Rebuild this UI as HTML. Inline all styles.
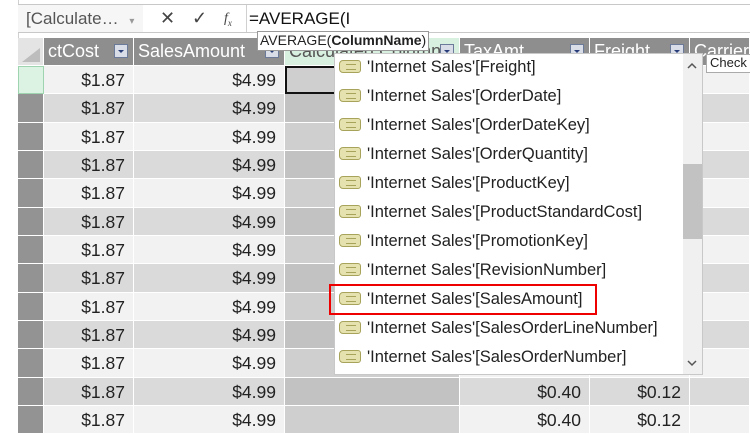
<!DOCTYPE html>
<html><head><style>
body{margin:0;width:750px;height:432px;overflow:hidden;background:#fff;font-family:"Liberation Sans",sans-serif;position:relative}
.abs{position:absolute}
.grid{position:absolute;left:18px;top:38px;display:grid;grid-template-columns:26px 90px 151px 175px 130px 100px 60px;grid-template-rows:28px repeat(13,28.33px)}
.grid div{box-sizing:border-box;border-right:1px solid #fff;border-bottom:1px solid #fff;font-size:17.5px;color:#222;text-align:right;padding-right:8px;line-height:28px;white-space:nowrap;overflow:hidden}
.h{background:#8e8e8e;color:#fff!important;text-align:left!important;padding-left:4px;line-height:27px!important;position:relative;font-size:18px!important}
.h i{position:absolute;right:5px;top:6px;width:14px;height:14px;background:#d8dde8;border:1px solid #6b7a99;box-sizing:border-box}
.h i:after{content:"";position:absolute;left:3px;top:5px;border-left:3px solid transparent;border-right:3px solid transparent;border-top:3px solid #2a3f7a}
.o{background:#f2f2f2}.e{background:#dadada}
.s{background:#939393}.c{background:#cfcfcf}.ce{background:#c2c2c2}
.dd{left:334px;top:53px;width:369px;height:322px;background:#fff;border:1px solid #c8c8c8;box-sizing:border-box}
.it{position:absolute;left:4px;height:29px;font-size:16.5px;color:#222;line-height:29px;white-space:nowrap}
.tag{display:inline-block;width:22px;height:13px;background:#e6e2b0;border:1px solid #a8a35a;border-radius:4px 3px 3px 4px;vertical-align:middle;margin-right:6px;box-sizing:border-box;position:relative;top:-1px}
.tag:after{content:"";position:absolute;left:6px;top:3px;width:10px;height:4px;border-top:1px solid #a8a35a;border-bottom:1px solid #a8a35a}
</style></head><body>
<div class="abs" style="left:0;top:0;width:18px;height:432px;background:#fff;border-right:1px solid #d0d0d0"></div>
<div class="abs" style="left:18px;top:4px;width:732px;height:1px;background:#c8c8c8"></div>
<div class="abs" style="left:18px;top:32px;width:732px;height:1px;background:#c8c8c8"></div>
<div class="abs" style="left:18px;top:5px;width:125px;height:27px;background:#f6f6f6;font-size:17px;color:#555;line-height:27px;padding-left:8px;box-sizing:border-box">[Calculate… <span style="font-size:10px;color:#999;margin-left:6px">▾</span></div>
<div class="abs" style="left:160px;top:5px;font-size:18px;color:#444;line-height:27px">✕</div>
<div class="abs" style="left:192px;top:5px;font-size:18px;color:#444;line-height:27px">✓</div>
<div class="abs" style="left:224px;top:5px;font-size:14px;color:#444;line-height:27px;font-family:'Liberation Serif',serif;font-style:italic">f<sub style="font-size:9px">x</sub></div>
<div class="abs" style="left:246px;top:5px;width:1px;height:27px;background:#d0d0d0"></div>
<div class="abs" style="left:249px;top:5px;font-size:17px;color:#111;line-height:27px">=AVERAGE(I</div>
<div class="grid">
<div class="h" style="background:#e4e4e4"><span style="position:absolute;left:4px;bottom:3px;border-left:18px solid transparent;border-bottom:14px solid #bdbdbd"></span></div><div class="h">ctCost<i></i></div><div class="h">SalesAmount<i></i></div><div class="h" style="background:#d8f0df;color:#555!important">Calculated Column 1<i></i></div><div class="h">TaxAmt<i></i></div><div class="h">Freight<i></i></div><div class="h">Carrier</div>
<div style="background:#dcf2e3;border:1px solid #9ed4b0"></div><div class="o">$1.87</div><div class="o">$4.99</div><div class="c" style="border:2px solid #111"></div><div class="o"></div><div class="o"></div><div class="o"></div>
<div class="s"></div><div class="e">$1.87</div><div class="e">$4.99</div><div class="ce"></div><div class="e"></div><div class="e"></div><div class="e"></div>
<div class="s"></div><div class="o">$1.87</div><div class="o">$4.99</div><div class="c"></div><div class="o"></div><div class="o"></div><div class="o"></div>
<div class="s"></div><div class="e">$1.87</div><div class="e">$4.99</div><div class="ce"></div><div class="e"></div><div class="e"></div><div class="e"></div>
<div class="s"></div><div class="o">$1.87</div><div class="o">$4.99</div><div class="c"></div><div class="o"></div><div class="o"></div><div class="o"></div>
<div class="s"></div><div class="e">$1.87</div><div class="e">$4.99</div><div class="ce"></div><div class="e"></div><div class="e"></div><div class="e"></div>
<div class="s"></div><div class="o">$1.87</div><div class="o">$4.99</div><div class="c"></div><div class="o"></div><div class="o"></div><div class="o"></div>
<div class="s"></div><div class="e">$1.87</div><div class="e">$4.99</div><div class="ce"></div><div class="e"></div><div class="e"></div><div class="e"></div>
<div class="s"></div><div class="o">$1.87</div><div class="o">$4.99</div><div class="c"></div><div class="o"></div><div class="o"></div><div class="o"></div>
<div class="s"></div><div class="e">$1.87</div><div class="e">$4.99</div><div class="ce"></div><div class="e"></div><div class="e"></div><div class="e"></div>
<div class="s"></div><div class="o">$1.87</div><div class="o">$4.99</div><div class="c"></div><div class="o"></div><div class="o"></div><div class="o"></div>
<div class="s"></div><div class="e">$1.87</div><div class="e">$4.99</div><div class="ce"></div><div class="e">$0.40</div><div class="e">$0.12</div><div class="e"></div>
<div class="s"></div><div class="o">$1.87</div><div class="o">$4.99</div><div class="c"></div><div class="o">$0.40</div><div class="o">$0.12</div><div class="o"></div>
</div>
<div class="abs" style="left:257px;top:31px;height:18px;background:#fff;border:1px solid #999;font-size:14px;line-height:17px;padding:0 2px;color:#222">AVERAGE(<b>ColumnName</b>)</div>
<div class="abs" style="left:706px;top:54px;height:17px;background:#fff;border:1px solid #aaa;font-size:13px;line-height:16px;padding:0 3px;color:#222;width:60px">Check</div>
<div class="abs dd">
<div class="it" style="top:-1px"><span class="tag"></span>'Internet Sales'[Freight]</div>
<div class="it" style="top:28px"><span class="tag"></span>'Internet Sales'[OrderDate]</div>
<div class="it" style="top:57px"><span class="tag"></span>'Internet Sales'[OrderDateKey]</div>
<div class="it" style="top:86px"><span class="tag"></span>'Internet Sales'[OrderQuantity]</div>
<div class="it" style="top:115px"><span class="tag"></span>'Internet Sales'[ProductKey]</div>
<div class="it" style="top:144px"><span class="tag"></span>'Internet Sales'[ProductStandardCost]</div>
<div class="it" style="top:173px"><span class="tag"></span>'Internet Sales'[PromotionKey]</div>
<div class="it" style="top:202px"><span class="tag"></span>'Internet Sales'[RevisionNumber]</div>
<div class="it" style="top:231px"><span class="tag"></span>'Internet Sales'[SalesAmount]</div>
<div class="it" style="top:260px"><span class="tag"></span>'Internet Sales'[SalesOrderLineNumber]</div>
<div class="it" style="top:289px"><span class="tag"></span>'Internet Sales'[SalesOrderNumber]</div>
<div class="abs" style="left:348px;top:0;width:19px;height:320px;background:#f0f0f0"></div>
<div class="abs" style="left:348px;top:110px;width:19px;height:75px;background:#c2c2c2"></div>
<svg class="abs" style="left:352px;top:8px" width="10" height="7"><path d="M1 6 L5 2 L9 6" fill="none" stroke="#555" stroke-width="1.5"/></svg>
<svg class="abs" style="left:352px;top:306px" width="10" height="7"><path d="M1 1 L5 5 L9 1" fill="none" stroke="#555" stroke-width="1.5"/></svg>
</div>
<div class="abs" style="left:329px;top:284px;width:268px;height:31px;border:2px solid #e00;box-sizing:border-box"></div>
</body></html>
